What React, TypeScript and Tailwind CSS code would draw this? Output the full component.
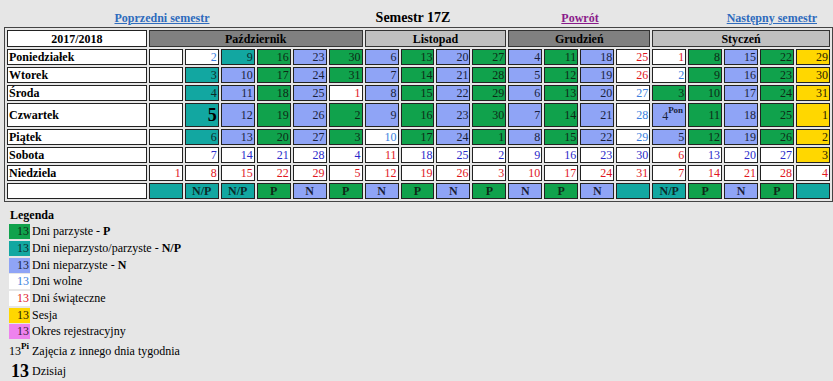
import React from "react";

type Kind = "P" | "N" | "X" | "W" | "S" | "H" | "E" | "-";

// each week column: Monday .. Sunday
type Day = [string, Kind];

const cellBg: Record<Kind, string> = {
  P: "bg-[#10a24c]",
  N: "bg-[#8fa4f6]",
  X: "bg-[#12a7a1]",
  W: "bg-white",
  S: "bg-white",
  H: "bg-white",
  E: "bg-[#ffd700]",
  "-": "bg-white",
};

const cellText: Record<Kind, string> = {
  P: "text-[#0d2a17]",
  N: "text-[#1a1f3a]",
  X: "text-[#0b2b2a]",
  W: "text-[#3b7fde]",
  S: "text-[#2a2ac9]",
  H: "text-[#e0161e]",
  E: "text-[#2a2200]",
  "-": "text-[#111]",
};

const days = ["Poniedziałek", "Wtorek", "Środa", "Czwartek", "Piątek", "Sobota", "Niedziela"];

const months = [
  { name: "Październik", span: 6, dark: true },
  { name: "Listopad", span: 4, dark: false },
  { name: "Grudzień", span: 4, dark: true },
  { name: "Styczeń", span: 5, dark: false },
];

const weeks: Day[][] = [
  [["", "-"], ["", "-"], ["", "-"], ["", "-"], ["", "-"], ["", "-"], ["1", "H"]],
  [["2", "W"], ["3", "X"], ["4", "X"], ["5", "X"], ["6", "X"], ["7", "S"], ["8", "H"]],
  [["9", "X"], ["10", "N"], ["11", "N"], ["12", "N"], ["13", "N"], ["14", "S"], ["15", "H"]],
  [["16", "P"], ["17", "P"], ["18", "P"], ["19", "P"], ["20", "P"], ["21", "S"], ["22", "H"]],
  [["23", "N"], ["24", "N"], ["25", "N"], ["26", "N"], ["27", "N"], ["28", "S"], ["29", "H"]],
  [["30", "P"], ["31", "P"], ["1", "H"], ["2", "P"], ["3", "P"], ["4", "S"], ["5", "H"]],
  [["6", "N"], ["7", "N"], ["8", "N"], ["9", "N"], ["10", "W"], ["11", "H"], ["12", "H"]],
  [["13", "P"], ["14", "P"], ["15", "P"], ["16", "P"], ["17", "P"], ["18", "S"], ["19", "H"]],
  [["20", "N"], ["21", "N"], ["22", "N"], ["23", "N"], ["24", "N"], ["25", "S"], ["26", "H"]],
  [["27", "P"], ["28", "P"], ["29", "P"], ["30", "P"], ["1", "P"], ["2", "S"], ["3", "H"]],
  [["4", "N"], ["5", "N"], ["6", "N"], ["7", "N"], ["8", "N"], ["9", "S"], ["10", "H"]],
  [["11", "P"], ["12", "P"], ["13", "P"], ["14", "P"], ["15", "P"], ["16", "S"], ["17", "H"]],
  [["18", "N"], ["19", "N"], ["20", "N"], ["21", "N"], ["22", "N"], ["23", "S"], ["24", "H"]],
  [["25", "H"], ["26", "H"], ["27", "W"], ["28", "W"], ["29", "W"], ["30", "S"], ["31", "H"]],
  [["1", "H"], ["2", "W"], ["3", "P"], ["4", "N"], ["5", "N"], ["6", "H"], ["7", "H"]],
  [["8", "P"], ["9", "P"], ["10", "P"], ["11", "P"], ["12", "P"], ["13", "S"], ["14", "H"]],
  [["15", "N"], ["16", "N"], ["17", "N"], ["18", "N"], ["19", "N"], ["20", "S"], ["21", "H"]],
  [["22", "P"], ["23", "P"], ["24", "P"], ["25", "P"], ["26", "P"], ["27", "S"], ["28", "H"]],
  [["29", "E"], ["30", "E"], ["31", "E"], ["1", "E"], ["2", "E"], ["3", "E"], ["4", "H"]],
];

const footer: [string, Kind][] = [
  ["", "X"], ["N/P", "X"], ["N/P", "X"], ["P", "P"], ["N", "N"], ["P", "P"], ["N", "N"],
  ["P", "P"], ["N", "N"], ["P", "P"], ["N", "N"], ["P", "P"], ["N", "N"], ["", "X"],
  ["N/P", "X"], ["P", "P"], ["N", "N"], ["P", "P"], ["", "X"],
];

const legend: { kind: Kind; label: string; bold?: string }[] = [
  { kind: "P", label: "Dni parzyste - ", bold: "P" },
  { kind: "X", label: "Dni nieparzysto/parzyste - ", bold: "N/P" },
  { kind: "N", label: "Dni nieparzyste - ", bold: "N" },
  { kind: "W", label: "Dni wolne" },
  { kind: "H", label: "Dni świąteczne" },
  { kind: "E", label: "Sesja" },
];

function DayCell({ day, week, row }: { day: Day; week: number; row: number }) {
  const [num, kind] = day;
  const today = week === 1 && row === 3;
  const moved = week === 14 && row === 3;
  return (
    <td
      className={`w-[34px] border border-[#222] p-0 pr-[1px] text-right align-middle ${cellBg[kind]} ${cellText[kind]}`}
    >
      {today ? (
        <span className="text-[18px] font-bold leading-[18px] text-black">{num}</span>
      ) : moved ? (
        <span className="pr-[1px]">
          {num}
          <sup className="relative top-[-2px] align-super text-[9px] font-bold leading-none">Pon</sup>
        </span>
      ) : (
        num
      )}
    </td>
  );
}

export default function App() {
  return (
    <div className="h-[381px] w-[833px] overflow-hidden bg-[#e6e6e6] font-['Liberation_Serif',serif] text-[12px] leading-[14px] text-black">
      {/* semester navigation */}
      <div className="flex h-[27px] items-baseline pt-[10px] font-bold leading-[15px]">
        <div className="w-[324px] text-center">
          <a href="#" className="text-[#2e6bbd] underline">
            Poprzedni semestr
          </a>
        </div>
        <div className="w-[178px] text-center text-[14px]">Semestr 17Z</div>
        <div className="w-[156px] text-center">
          <a href="#" className="text-[#8a1a8a] underline">
            Powrót
          </a>
        </div>
        <div className="ml-auto pr-[16px]">
          <a href="#" className="text-[#2e6bbd] underline">
            Następny semestr
          </a>
        </div>
      </div>

      <table className="ml-[4px] border-separate border-spacing-[2px] border border-[#444]">
        <tbody>
          <tr className="h-[17px]">
            <td className="w-[140px] border border-[#222] bg-white p-0 text-center font-bold">2017/2018</td>
            {months.map((m) => (
              <td
                key={m.name}
                colSpan={m.span}
                className={`border border-[#333] p-0 text-center font-bold ${m.dark ? "bg-[#808080]" : "bg-[#c0c0c0]"}`}
              >
                {m.name}
              </td>
            ))}
          </tr>
          {days.map((name, row) => (
            <tr key={name} className={row === 3 ? "h-[24px]" : "h-[16px]"}>
              <td className="border border-[#222] bg-white p-0 pl-[1px] text-left font-bold">{name}</td>
              {weeks.map((w, i) => (
                <DayCell key={i} day={w[row]} week={i} row={row} />
              ))}
            </tr>
          ))}
          <tr className="h-[16px]">
            <td className="border border-[#222] bg-white p-0" />
            {footer.map(([label, kind], i) => (
              <td key={i} className={`border border-[#222] p-0 text-center font-bold ${cellBg[kind]} ${cellText[kind]}`}>
                {label}
              </td>
            ))}
          </tr>
        </tbody>
      </table>

      {/* legend */}
      <div className="mt-[5px] pl-[9px] leading-[15px]">
        <div className="flex h-[16.67px] items-center pl-[1px] font-bold">Legenda</div>
        {legend.map((l) => (
          <div key={l.label} className="flex h-[16.67px] items-center">
            <span className={`h-[15px] w-[21px] pr-[1px] text-right ${cellBg[l.kind]} ${cellText[l.kind]}`}>13</span>
            <span className="ml-[2px]">
              {l.label}
              {l.bold && <b>{l.bold}</b>}
            </span>
          </div>
        ))}
        <div className="flex h-[16.67px] items-center">
          <span className="h-[15px] w-[21px] bg-[#ee82ee] pr-[1px] text-right text-[#3a1a3a]">13</span>
          <span className="ml-[2px]">Okres rejestracyjny</span>
        </div>
        <div className="flex h-[20px] items-end pb-[1px]">
          <span className="w-[23px]">
            13
            <sup className="relative top-[-0.7em] text-[9px] font-bold">Pi</sup>
          </span>
          <span>Zajęcia z innego dnia tygodnia</span>
        </div>
        <div className="flex h-[22px] items-center">
          <span className="w-[23px] pl-[2px] text-[18px] font-bold">13</span>
          <span>Dzisiaj</span>
        </div>
      </div>
    </div>
  );
}
